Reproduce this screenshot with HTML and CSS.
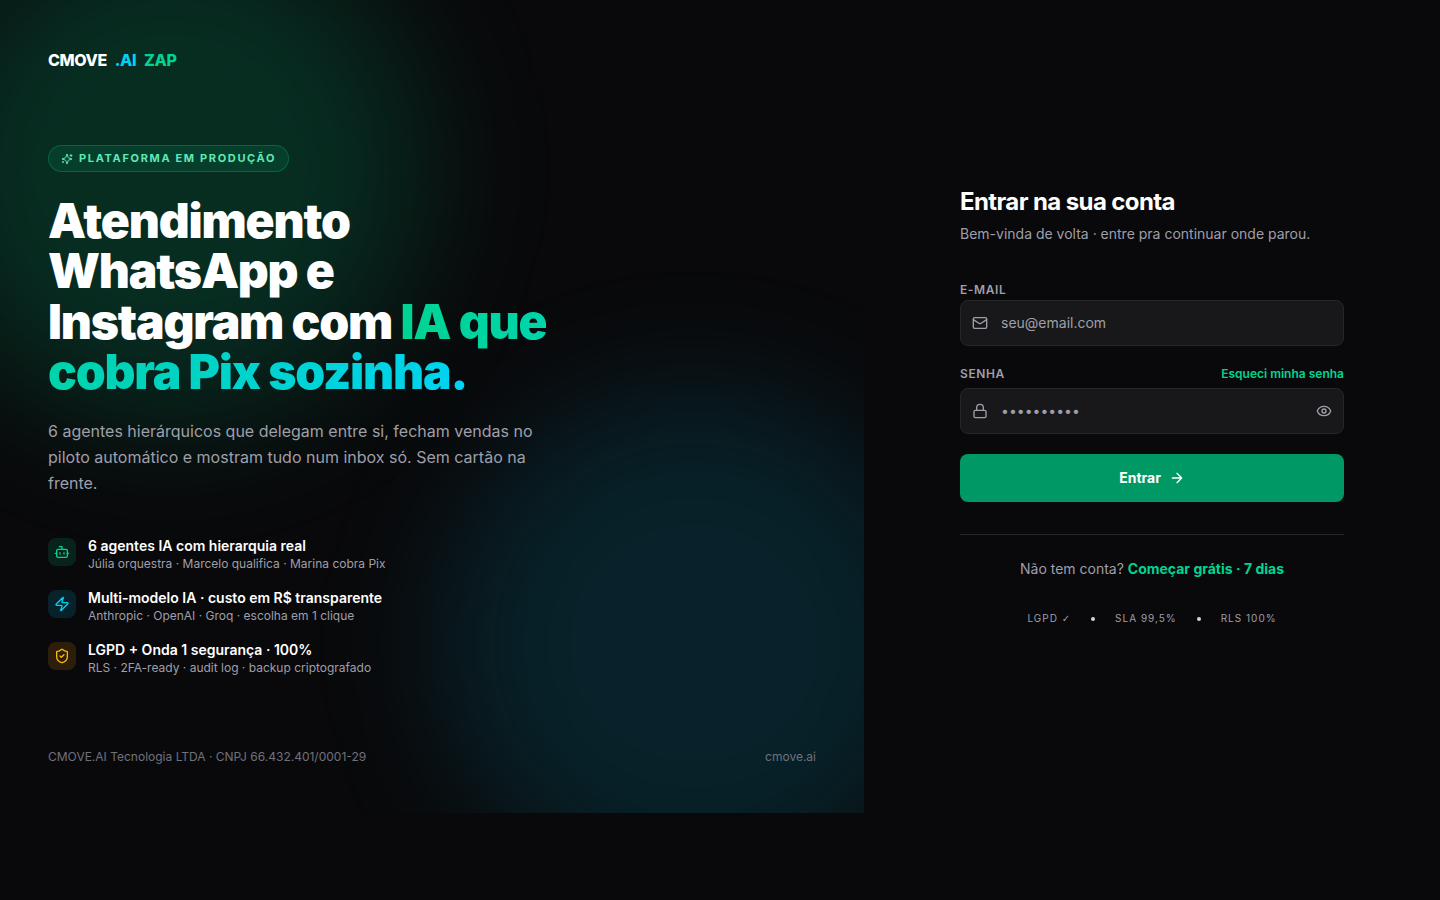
FILE: index.html
```
<!DOCTYPE html>
<html lang="pt-BR">
<head>
    <meta charset="UTF-8">
    <meta name="viewport" content="width=device-width, initial-scale=1">
    <title>Entrar · CMOVE.AI ZAP</title>
    <link rel="stylesheet" href="styles.css">
</head>

<body>

<div class="page">

    <!-- hero -->
    <section class="hero">
        <div class="glow glow-green"></div>
        <div class="glow glow-cyan"></div>

        <a class="logo" href="#">
            <span>CMOVE</span>
            <span class="logo-ai">.AI</span>
            <span class="logo-zap">ZAP</span>
        </a>

        <div class="pitch">
            <div class="badge">
                <svg class="icon" width="12" height="12" viewBox="0 0 24 24">
                    <path d="M9.937 15.5A2 2 0 0 0 8.5 14.063l-6.135-1.582a.5.5 0 0 1 0-.962L8.5 9.936A2 2 0 0 0 9.937 8.5l1.582-6.135a.5.5 0 0 1 .963 0L14.063 8.5A2 2 0 0 0 15.5 9.937l6.135 1.581a.5.5 0 0 1 0 .964L15.5 14.063a2 2 0 0 0-1.437 1.437l-1.582 6.135a.5.5 0 0 1-.963 0z"/>
                    <path d="M20 3v4M22 5h-4M4 17v2M5 18H3"/>
                </svg>
                Plataforma em produção
            </div>

            <h1>Atendimento WhatsApp e Instagram com <span class="grad">IA que cobra Pix sozinha.</span></h1>

            <p class="lead">6 agentes hierárquicos que delegam entre si, fecham vendas no piloto automático e mostram tudo num inbox só. Sem cartão na frente.</p>

            <ul class="features">
                <li>
                    <span class="tile tile-green">
                        <svg class="icon" width="16" height="16" viewBox="0 0 24 24">
                            <path d="M12 8V4H8"/>
                            <rect width="16" height="12" x="4" y="8" rx="2"/>
                            <path d="M2 14h2M20 14h2M15 13v2M9 13v2"/>
                        </svg>
                    </span>
                    <div>
                        <strong>6 agentes IA com hierarquia real</strong>
                        <p>Júlia orquestra · Marcelo qualifica · Marina cobra Pix</p>
                    </div>
                </li>
                <li>
                    <span class="tile tile-cyan">
                        <svg class="icon" width="16" height="16" viewBox="0 0 24 24">
                            <path d="M4 14a1 1 0 0 1-.78-1.63l9.9-10.2a.5.5 0 0 1 .86.46l-1.92 6.02A1 1 0 0 0 13 10h7a1 1 0 0 1 .78 1.63l-9.9 10.2a.5.5 0 0 1-.86-.46l1.92-6.02A1 1 0 0 0 11 14z"/>
                        </svg>
                    </span>
                    <div>
                        <strong>Multi-modelo IA · custo em R$ transparente</strong>
                        <p>Anthropic · OpenAI · Groq · escolha em 1 clique</p>
                    </div>
                </li>
                <li>
                    <span class="tile tile-amber">
                        <svg class="icon" width="16" height="16" viewBox="0 0 24 24">
                            <path d="M20 13c0 5-3.5 7.5-7.66 8.95a1 1 0 0 1-.67-.01C7.5 20.5 4 18 4 13V6a1 1 0 0 1 1-1c2 0 4.5-1.2 6.24-2.72a1.17 1.17 0 0 1 1.52 0C14.51 3.81 17 5 19 5a1 1 0 0 1 1 1z"/>
                            <path d="m9 12 2 2 4-4"/>
                        </svg>
                    </span>
                    <div>
                        <strong>LGPD + Onda 1 segurança · 100%</strong>
                        <p>RLS · 2FA-ready · audit log · backup criptografado</p>
                    </div>
                </li>
            </ul>
        </div>

        <footer class="legal">
            <span>CMOVE.AI Tecnologia LTDA · CNPJ 66.432.401/0001-29</span>
            <span>cmove.ai</span>
        </footer>
    </section>

    <!-- login -->
    <main class="login">
        <div class="login-box">
            <h2>Entrar na sua conta</h2>
            <p class="sub">Bem-vinda de volta · entre pra continuar onde parou.</p>

            <form>
                <div class="row">
                    <label for="email">E-mail</label>
                </div>
                <div class="field">
                    <svg class="icon" width="16" height="16" viewBox="0 0 24 24">
                        <rect width="20" height="16" x="2" y="4" rx="2"/>
                        <path d="m22 7-8.97 5.7a1.94 1.94 0 0 1-2.06 0L2 7"/>
                    </svg>
                    <input type="email" id="email" placeholder="seu@email.com">
                </div>

                <div class="row row-senha">
                    <label for="senha">Senha</label>
                    <a class="forgot" href="#">Esqueci minha senha</a>
                </div>
                <div class="field">
                    <svg class="icon" width="16" height="16" viewBox="0 0 24 24">
                        <rect width="18" height="11" x="3" y="11" rx="2"/>
                        <path d="M7 11V7a5 5 0 0 1 10 0v4"/>
                    </svg>
                    <input type="password" id="senha" placeholder="••••••••••">
                    <button class="eye" type="button" aria-label="Mostrar senha">
                        <svg class="icon" width="16" height="16" viewBox="0 0 24 24">
                            <path d="M2.062 12.348a1 1 0 0 1 0-.696 10.75 10.75 0 0 1 19.876 0 1 1 0 0 1 0 .696 10.75 10.75 0 0 1-19.876 0"/>
                            <circle cx="12" cy="12" r="3"/>
                        </svg>
                    </button>
                </div>

                <button class="submit" type="submit">
                    Entrar
                    <svg class="icon" width="16" height="16" viewBox="0 0 24 24">
                        <path d="M5 12h14M12 5l7 7-7 7"/>
                    </svg>
                </button>
            </form>

            <p class="signup">Não tem conta? <a href="#">Começar grátis · 7 dias</a></p>

            <div class="seals">
                <span>LGPD <span class="check">✓</span></span>
                <i class="dot"></i>
                <span>SLA 99,5%</span>
                <i class="dot"></i>
                <span>RLS 100%</span>
            </div>
        </div>
    </main>

</div>

</body>
</html>
```
FILE: styles.css
```
* {
    box-sizing: border-box;
    margin: 0;
    padding: 0;
}

body {
    background: #09090b;
    color: #fff;
    font-family: Inter, "Liberation Sans", sans-serif;
    font-size: 14px;
    line-height: 20px;
}

a {
    color: inherit;
    text-decoration: none;
}

.icon {
    flex-shrink: 0;
    fill: none;
    stroke: currentColor;
    stroke-width: 2;
    stroke-linecap: round;
    stroke-linejoin: round;
}

.page {
    display: grid;
    grid-template-columns: 3fr 2fr;
}

/* hero */
.hero {
    position: relative;
    overflow: hidden;
    display: flex;
    flex-direction: column;
    padding: 48px;
}

.hero > * {
    position: relative;
}

.hero > .glow {
    position: absolute;
    width: 500px;
    height: 500px;
    border-radius: 50%;
    filter: blur(64px);
}

.hero > .glow-green {
    top: -80px;
    left: -80px;
    background: rgba(0, 188, 125, 0.2);
}

.hero > .glow-cyan {
    right: -80px;
    bottom: -80px;
    background: rgba(0, 184, 219, 0.15);
}

.logo {
    display: flex;
    gap: 8px;
    font-size: 16px;
    font-weight: 800;
    line-height: 24px;
    letter-spacing: -0.4px;
}

.logo-ai {
    color: #00d3f2;
}

.logo-zap {
    color: #00d492;
}

.pitch {
    max-width: 512px;
    margin: 73px 0;
}

.badge {
    display: inline-flex;
    align-items: center;
    gap: 6px;
    padding: 4px 12px;
    border: 1px solid rgba(0, 188, 125, 0.3);
    border-radius: 20px;
    background: rgba(0, 188, 125, 0.12);
    color: #5ee9b5;
    font-size: 11px;
    font-weight: 700;
    line-height: 17px;
    letter-spacing: 0.15em;
    text-transform: uppercase;
}

h1 {
    margin-top: 24px;
    font-size: 48px;
    font-weight: 900;
    line-height: 1.05;
    letter-spacing: -0.025em;
}

.grad {
    background: linear-gradient(to right, #00d492, #00d3f2);
    -webkit-background-clip: text;
    background-clip: text;
    color: transparent;
}

.lead {
    margin-top: 20px;
    color: #9f9fa9;
    font-size: 16px;
    line-height: 26px;
}

.features {
    display: grid;
    gap: 16px;
    margin-top: 40px;
    list-style: none;
}

.features li {
    display: flex;
    gap: 12px;
}

.features strong {
    display: block;
    font-weight: 600;
}

.features p {
    color: #9f9fa9;
    font-size: 12px;
    line-height: 16px;
}

.tile {
    display: grid;
    place-items: center;
    width: 28px;
    height: 28px;
    margin-top: 2px;
    border-radius: 8px;
}

.tile-green {
    background: rgba(0, 188, 125, 0.15);
    color: #00d492;
}

.tile-cyan {
    background: rgba(0, 184, 219, 0.15);
    color: #00d3f2;
}

.tile-amber {
    background: rgba(254, 154, 0, 0.15);
    color: #ffb900;
}

.legal {
    display: flex;
    justify-content: space-between;
    color: #71717b;
    font-size: 12px;
    line-height: 16px;
}

/* login */
.login {
    display: flex;
    align-items: center;
    justify-content: center;
    padding: 48px;
}

.login-box {
    width: 100%;
    max-width: 384px;
}

h2 {
    font-size: 24px;
    font-weight: 700;
    line-height: 32px;
    letter-spacing: -0.025em;
}

.sub {
    margin: 6px 0 36px;
    color: #9f9fa9;
}

.row {
    display: flex;
    align-items: center;
    justify-content: space-between;
    font-size: 12px;
    line-height: 20px;
}

.row-senha {
    margin: 18px 0 4px;
}

.row label {
    color: #9f9fa9;
    font-weight: 600;
    letter-spacing: 0.05em;
    text-transform: uppercase;
}

.forgot {
    color: #00d492;
    font-weight: 600;
}

.field {
    display: flex;
    align-items: center;
    gap: 13px;
    height: 46px;
    padding: 0 11px;
    border: 1px solid #27272a;
    border-radius: 8px;
    background: #18181b;
    color: #9f9fa9;
}

.field input {
    flex: 1;
    min-width: 0;
    border: 0;
    outline: 0;
    background: none;
    color: #fff;
    font: inherit;
}

.field input::placeholder {
    color: #9f9fa9;
}

.eye {
    display: flex;
    border: 0;
    background: none;
    color: inherit;
    cursor: pointer;
}

.submit {
    display: flex;
    align-items: center;
    justify-content: center;
    gap: 8px;
    width: 100%;
    height: 48px;
    margin-top: 20px;
    border: 0;
    border-radius: 8px;
    background: #009966;
    color: #fff;
    font: inherit;
    font-weight: 700;
    cursor: pointer;
}

.signup {
    margin-top: 32px;
    padding-top: 24px;
    border-top: 1px solid #27272a;
    color: #9f9fa9;
    text-align: center;
}

.signup a {
    color: #00d492;
    font-weight: 700;
}

.seals {
    display: flex;
    align-items: center;
    justify-content: center;
    gap: 20px;
    margin-top: 32px;
    color: #9f9fa9;
    font-size: 10px;
    line-height: 15px;
    letter-spacing: 0.1em;
}

.check {
    font-family: "DejaVu Sans", sans-serif;
}

.dot {
    width: 4px;
    height: 4px;
    border-radius: 50%;
    background: #d4d4d8;
}
```
